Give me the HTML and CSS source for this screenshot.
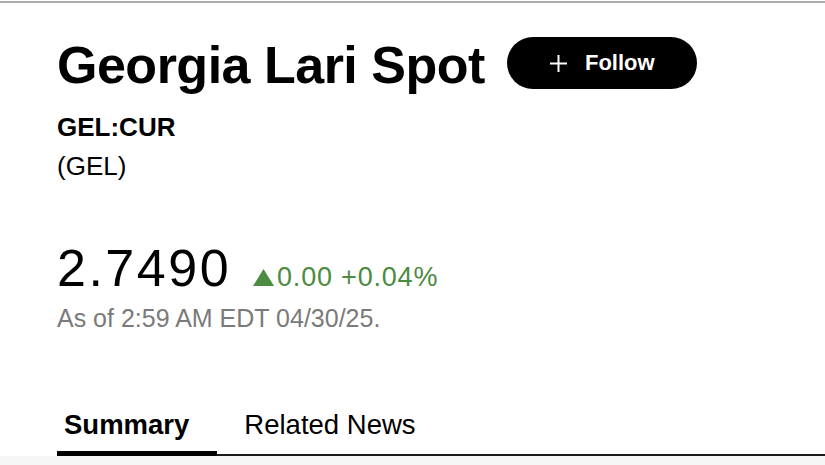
FILE: index.html
```html
<!DOCTYPE html>
<html lang="en">
<head>
    <meta charset="UTF-8">
    <meta name="viewport" content="width=device-width, initial-scale=1.0">
    <title>Georgia Lari Spot</title>
    <link rel="stylesheet" href="styles.css">
</head>
<body>
    <div class="top-rule"></div>
    <div class="quote">
        <div class="title-row">
            <h1 class="title">Georgia Lari Spot</h1>
            <button class="follow">
                <svg width="19" height="19" viewBox="0 0 19 19"><path d="M9.5 1v17M1 9.5h17" stroke="#fff" stroke-width="2" fill="none"/></svg>
                <span>Follow</span>
            </button>
        </div>
        <div class="ticker">GEL:CUR</div>
        <div class="code">(GEL)</div>

        <div class="price-row">
            <span class="price">2.7490</span>
            <span class="change">
                <svg class="arrow" width="21" height="17" viewBox="0 0 21 17"><path d="M10.5 0L21 17H0z" fill="#4c8b42"/></svg>0.00 +0.04%
            </span>
        </div>
        <div class="as-of">As of 2:59 AM EDT 04/30/25.</div>
    </div>

    <div class="tabs">
        <div class="tab active">Summary</div>
        <div class="tab">Related News</div>
    </div>
    <div class="below"></div>
</body>
</html>
```

FILE: styles.css
```css
body {
    margin: 0;
    background: #fff;
    font-family: "Liberation Sans", Arial, sans-serif;
    color: #000;
    overflow: hidden;
}

.top-rule {
    margin-top: 1px;
    height: 2px;
    background: #ababab;
}

.quote {
    padding-left: 57px;
}

.title-row {
    display: flex;
    align-items: flex-start;
    margin-top: 34px;
}

.title {
    margin: 0;
    padding-top: 2px;
    font-size: 52px;
    line-height: 52px;
    font-weight: bold;
    letter-spacing: -0.5px;
}

.follow {
    margin-left: 22px;
    width: 190px;
    height: 52px;
    border: none;
    border-radius: 26px;
    background: #000;
    color: #fff;
    display: flex;
    align-items: center;
    justify-content: center;
    gap: 17px;
    font-family: inherit;
    font-size: 22px;
    font-weight: bold;
    padding: 0;
}

.ticker {
    margin-top: 17px;
    font-size: 26px;
    line-height: 39px;
    font-weight: bold;
}

.code {
    font-size: 26px;
    line-height: 39px;
}

.price-row {
    display: flex;
    align-items: baseline;
    margin-top: 52px;
    height: 60px;
}

.price {
    font-size: 52px;
    line-height: 60px;
    letter-spacing: 2.5px;
}

.change {
    margin-left: 22px;
    font-size: 27px;
    letter-spacing: 0.8px;
    color: #4c8b42;
}

.arrow {
    margin-right: 3px;
}

.as-of {
    margin-top: 5px;
    font-size: 25px;
    line-height: 30px;
    color: #7a7a7a;
}

.tabs {
    display: flex;
    margin: 75px 0 0 57px;
    border-bottom: 2px solid #1a1a1a;
}

.tab {
    font-size: 27.5px;
    line-height: 34px;
    padding: 0 28px 9px 27px;
}

.tab.active {
    font-weight: bold;
    padding-left: 7px;
    border-bottom: 5px solid #000;
    margin-bottom: -2px;
}

.below {
    height: 20px;
    background: #f6f6f6;
}
```
